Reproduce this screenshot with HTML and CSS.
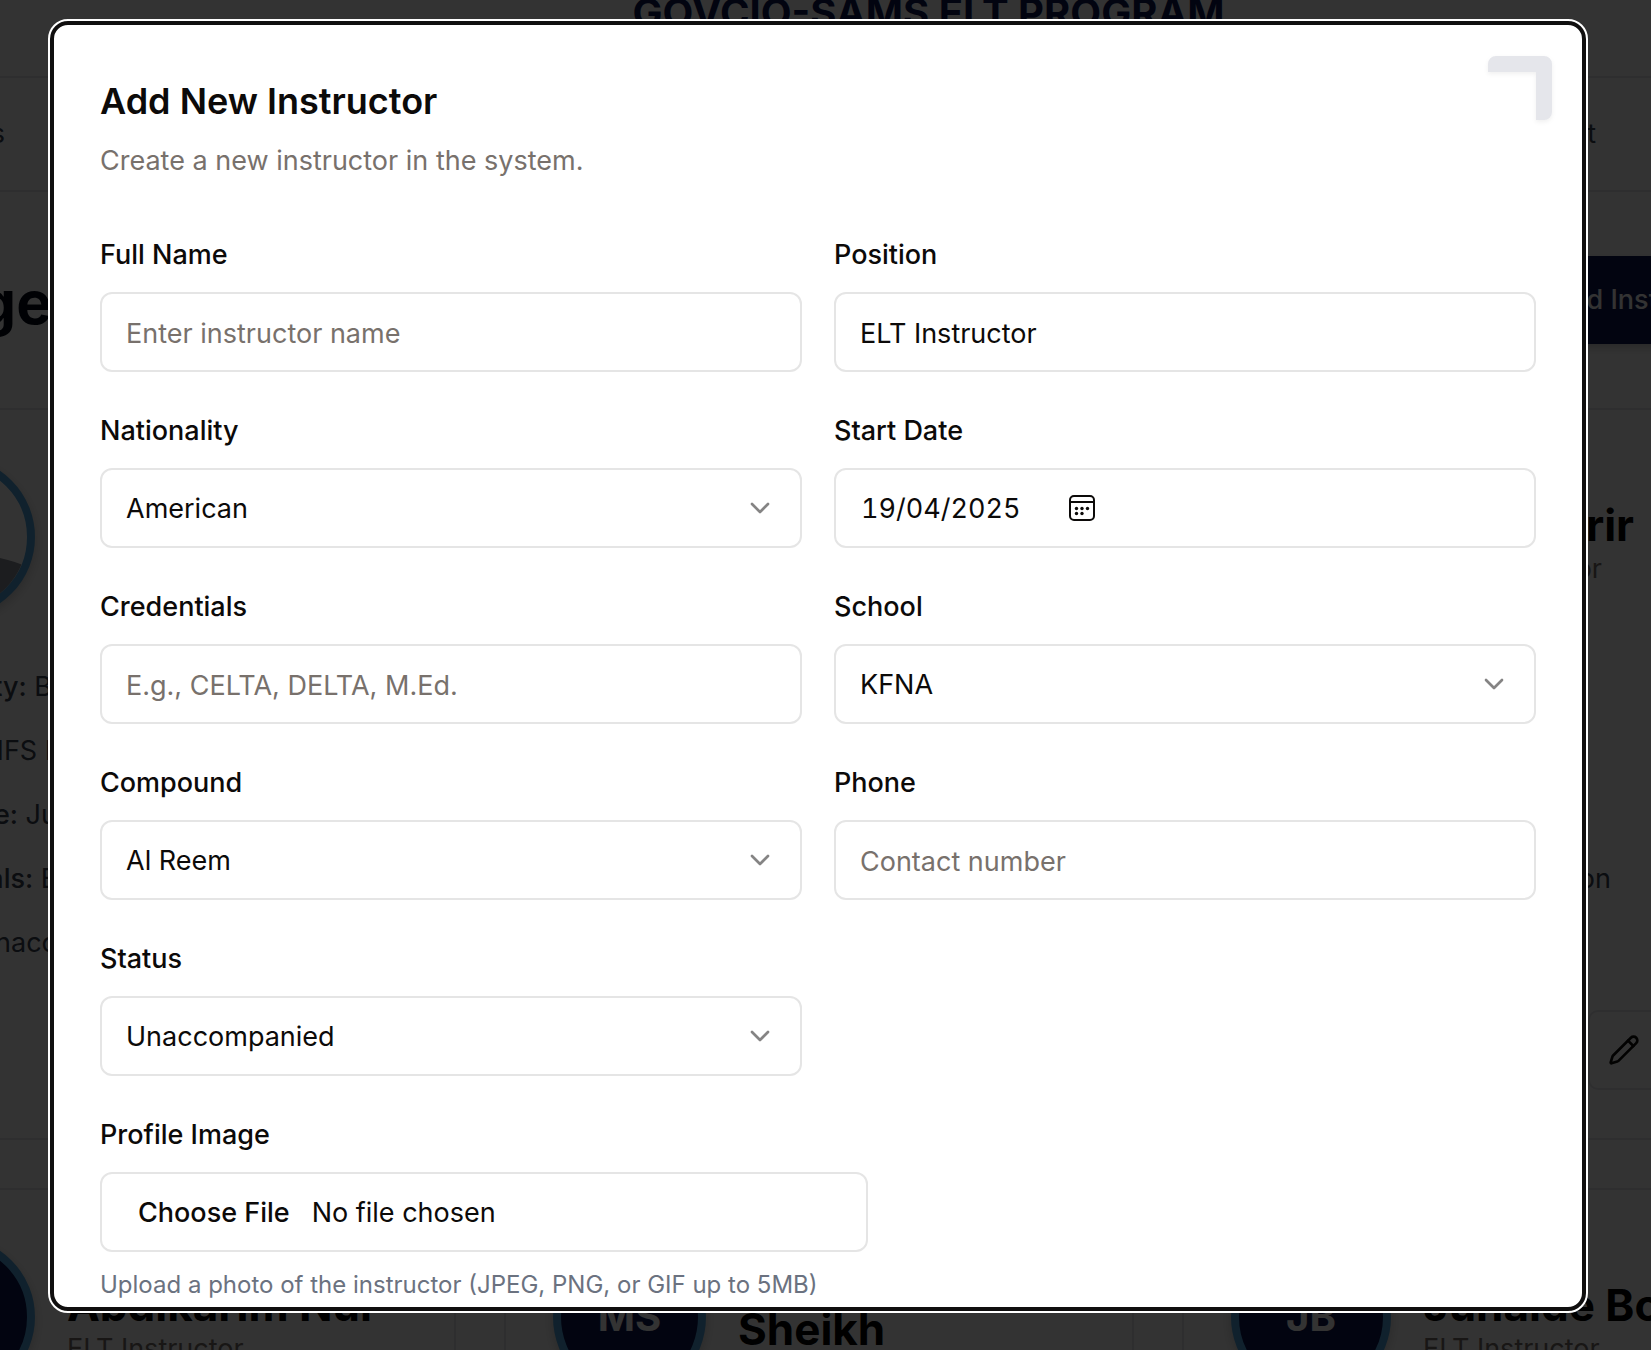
FILE: index.html
```html
<!DOCTYPE html>
<html lang="en">
<head>
<meta charset="utf-8">
<title>Add New Instructor</title>
<link rel="stylesheet" href="styles.css">
</head>
<body>
<div class="page">
  <header class="site-header"><span>GOVCIO-SAMS ELT PROGRAM</span></header>
  <nav class="site-nav"><a class="nav-start" href="#">Instructors</a><a class="nav-end" href="#">t</a></nav>
  <div class="page-bar">
    <h1 class="page-title">Manage</h1>
    <button class="add-button" type="button">Add Instructor</button>
  </div>
  <main class="cards">
    <article class="card card-tall">
      <div class="person"><span class="avatar avatar-photo"><svg viewBox="0 0 144 144"><path d="M20 144 Q50 84 112 92 Q132 96 144 102 V144Z" fill="#8b919b"/></svg></span></div>
      <div class="facts">
        <p class="fact-short"><b>Nationality:</b> B</p><p class="fact-short">NFS I</p><p><b>Start Date:</b> Ju</p><p><b>Credentials:</b> E</p><p>Unacc</p>
      </div>
    </article>
    <article class="card card-tall"></article>
    <article class="card card-tall card-side">
      <div class="side-head"><h2 class="name">irir</h2><p class="role">Instructor</p></div>
      <p class="side-fact">on</p>
      <button class="edit-button" type="button" aria-label="Edit"><svg viewBox="0 0 24 24"><path d="M21.174 6.812a1 1 0 0 0-3.986-3.987L3.842 16.174a2 2 0 0 0-.5.83l-1.321 4.352a.5.5 0 0 0 .623.622l4.353-1.32a2 2 0 0 0 .83-.497z"/><path d="m15 5 4 4"/></svg></button>
    </article>
    <article class="card">
      <div class="person"><span class="avatar">AN</span><div class="who"><h2 class="name">Abdikarim Nur</h2><p class="role">ELT Instructor</p></div></div>
    </article>
    <article class="card">
      <div class="person"><span class="avatar avatar-narrow">MS</span><div class="who who-wrap"><h2 class="name">Mohamed Sheikh</h2><p class="role">ELT Instructor</p></div></div>
    </article>
    <article class="card">
      <div class="person"><span class="avatar">JB</span><div class="who"><h2 class="name">Junaide Bo</h2><p class="role">ELT Instructor</p></div></div>
    </article>
  </main>
</div>

<div class="overlay">
  <section class="dialog" role="dialog" aria-modal="true" aria-labelledby="dialog-title">
    <button class="close" type="button" aria-label="Close"><svg viewBox="0 0 64 64"><path d="M0 16V8a8 8 0 0 1 8-8h48a8 8 0 0 1 8 8v48a8 8 0 0 1-8 8h-8V16z"/></svg></button>
    <h2 class="dialog-title" id="dialog-title">Add New Instructor</h2>
    <p class="dialog-text">Create a new instructor in the system.</p>
    <form class="form">
      <div class="field"><label for="name">Full Name</label><input class="control" id="name" type="text" placeholder="Enter instructor name"></div>
      <div class="field"><label for="position">Position</label><input class="control" id="position" type="text" value="ELT Instructor"></div>
      <div class="field"><label for="nationality">Nationality</label>
        <div class="select"><select class="control" id="nationality"><option>American</option></select><svg viewBox="0 0 24 24"><path d="m6 9 6 6 6-6"/></svg></div></div>
      <div class="field"><label for="start">Start Date</label>
        <div class="control date"><input id="start" type="text" value="19/04/2025"><button type="button" aria-label="Open calendar"><svg viewBox="0 0 26 26"><rect x="1" y="1" width="24" height="24" rx="4"/><path d="M1 7h24"/><g class="dots"><circle cx="7.500" cy="13.500" r="1.700"/><circle cx="13" cy="13.500" r="1.700"/><circle cx="18.500" cy="13.500" r="1.700"/><circle cx="7.500" cy="18.500" r="1.700"/><circle cx="13" cy="18.500" r="1.700"/></g></svg></button></div></div>
      <div class="field"><label for="credentials">Credentials</label><input class="control" id="credentials" type="text" placeholder="E.g., CELTA, DELTA, M.Ed."></div>
      <div class="field"><label for="school">School</label>
        <div class="select"><select class="control" id="school"><option>KFNA</option></select><svg viewBox="0 0 24 24"><path d="m6 9 6 6 6-6"/></svg></div></div>
      <div class="field"><label for="compound">Compound</label>
        <div class="select"><select class="control" id="compound"><option>Al Reem</option></select><svg viewBox="0 0 24 24"><path d="m6 9 6 6 6-6"/></svg></div></div>
      <div class="field"><label for="phone">Phone</label><input class="control" id="phone" type="tel" placeholder="Contact number"></div>
      <div class="field"><label for="status">Status</label>
        <div class="select"><select class="control" id="status"><option>Unaccompanied</option></select><svg viewBox="0 0 24 24"><path d="m6 9 6 6 6-6"/></svg></div></div>
      <div class="field field-wide"><label for="photo">Profile Image</label><input class="control file" id="photo" type="file" accept="image/*"><p class="hint">Upload a photo of the instructor (JPEG, PNG, or GIF up to 5MB)</p></div>
    </form>
  </section>
</div>
</body>
</html>
```

FILE: styles.css
```css
* { box-sizing: border-box; }
html, body { height: 100%; }
body { margin: 0; overflow: hidden; background: #fff; color: #0c0a09; font: 400 27px/40px Inter, "Liberation Sans", sans-serif; }
h1, h2, p { margin: 0; }
button, input, select { font: inherit; color: inherit; }
svg { display: block; }

/* Page behind the dialog */
.page { height: 100%; overflow: hidden; }
.site-header { display: flex; justify-content: center; height: 78px; padding-left: 206px; border-bottom: 2px solid #e5e7eb; font-size: 40px; line-height: 26px; font-weight: 700; color: #0a1550; }
.site-nav { display: flex; justify-content: space-between; align-items: center; height: 114px; border-bottom: 2px solid #e5e7eb; }
.site-nav a { color: #374151; text-decoration: none; }
.nav-start { display: flex; justify-content: flex-end; width: 5px; }
.nav-end { padding-right: 55px; }
.page-bar { display: flex; justify-content: space-between; height: 216px; padding-top: 64px; }
.page-title { display: flex; justify-content: flex-end; width: 52px; font-size: 60px; line-height: 92px; font-weight: 700; color: #020817; }
.add-button { width: 160px; height: 88px; margin-right: -60px; padding: 0; border: 0; background: #0a1550; color: #fff; font-weight: 500; white-space: nowrap; box-shadow: 0 4px 8px rgba(0, 0, 0, .2); }
.cards { display: grid; grid-template-columns: repeat(3, 630px); gap: 48px; margin-left: -174px; }
.card { min-height: 400px; padding: 47px; border: 2px solid #e5e7eb; }
.card-tall { height: 732px; }
.person { display: flex; gap: 32px; }
.avatar { display: flex; flex: none; align-items: center; justify-content: center; width: 160px; height: 160px; border: 8px solid #50a6de; border-radius: 50%; overflow: hidden; background: #0a1550; color: #fff; font-size: 40px; font-weight: 700; box-shadow: 0 4px 12px rgba(0, 0, 0, .2); }
.avatar svg { width: 144px; }
.avatar-photo { background: #fff; }
.avatar-narrow { width: 153px; }
.who { display: flex; flex-direction: column; justify-content: center; padding-top: 16px; white-space: nowrap; }
.who-wrap { white-space: normal; }
.name { font-size: 44px; line-height: 48px; font-weight: 700; color: #000; }
.who-wrap .name { width: 240px; }
.role { line-height: 40px; color: #78716c; }
.facts { display: flex; flex-direction: column; align-items: flex-end; gap: 24px; width: 182px; padding-top: 50px; color: #374151; white-space: nowrap; }
.facts b { font-weight: 500; }
.fact-short { padding-right: 5px; }
.card-side { display: flex; flex-direction: column; align-items: flex-start; padding-left: 300px; }
.side-head { display: flex; flex-direction: column; align-items: flex-end; width: 150px; padding-top: 44px; }
.side-head .role { padding-right: 32px; }
.side-fact { width: 127px; padding-top: 270px; text-align: right; color: #374151; }
.edit-button { display: flex; align-items: center; width: 240px; height: 80px; margin-top: 111px; margin-left: 104px; padding: 0 18px; border: 2px solid #e5e7eb; border-radius: 10px; background: transparent; }
.edit-button svg { width: 32px; height: 32px; fill: none; stroke: #0c0a09; stroke-width: 2; stroke-linecap: round; stroke-linejoin: round; }

/* Dialog */
.overlay { position: fixed; inset: 0; display: flex; padding: 21px 65px 39px 50px; background: rgba(0, 0, 0, .8); }
.dialog { position: relative; flex: 1; overflow: hidden; padding: 56px 46px 0; border: 4px solid #100f0f; border-radius: 18px; background: #fff; outline: 2px solid #fff; }
.close { position: absolute; top: 31px; right: 30px; width: 64px; height: 64px; padding: 0; border: 0; background: none; }
.close svg { overflow: visible; fill: #e5e6eb; filter: drop-shadow(0 2px 2px rgba(0, 0, 0, .06)); }
.dialog-title { font-size: 36px; line-height: 40px; font-weight: 600; }
.dialog-text { margin-top: 20px; color: #78716c; }
.form { display: grid; grid-template-columns: 1fr 1fr; gap: 44px 32px; margin-top: 59px; }
.field { display: flex; flex-direction: column; gap: 22px; }
.field label { line-height: 30px; font-weight: 500; }
.field-wide { grid-column: 1 / -1; }
.control { width: 100%; height: 80px; padding: 2px 24px 0; border: 2px solid #e5e5e5; border-radius: 12px; background: #fff; outline: 0; }
.control::placeholder { color: #78716c; opacity: 1; }
.select { position: relative; }
select.control { appearance: none; }
.select svg { position: absolute; top: 24px; right: 26px; width: 32px; height: 32px; fill: none; stroke: #858484; stroke-width: 2; stroke-linecap: round; stroke-linejoin: round; pointer-events: none; }
.date { display: flex; align-items: center; padding-top: 0; }
.date input { width: 209px; padding: 2px 1px 0; border: 0; background: none; outline: 0; font-variant-numeric: tabular-nums; }
.date button { padding: 0; border: 0; background: none; }
.date svg { width: 26px; height: 26px; fill: none; stroke: #0c0a09; stroke-width: 2; }
.date .dots { fill: #0c0a09; stroke: none; }
.file { max-width: 768px; padding-top: 0; line-height: 78px; }
.file::file-selector-button { margin: 0 10px 0 0; padding: 0 12px; border: 0; background: transparent; font: inherit; font-weight: 500; color: inherit; }
.hint { margin-top: -5px; font-size: 24px; line-height: 32px; color: #6b7280; }
```
